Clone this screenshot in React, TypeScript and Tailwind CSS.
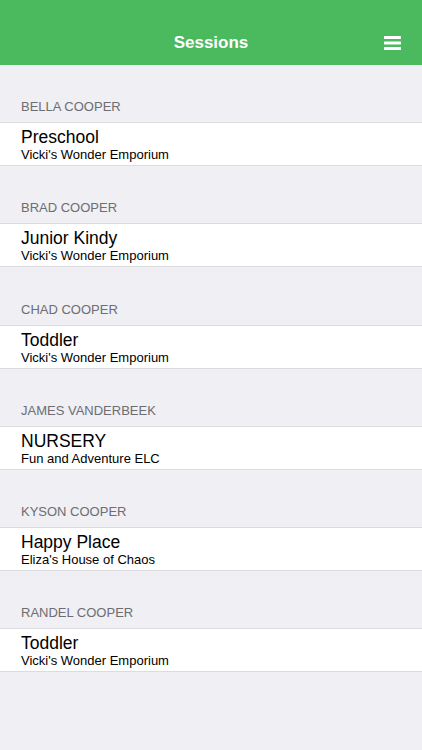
const sessions = [
  { child: "BELLA COOPER", room: "Preschool", centre: "Vicki's Wonder Emporium" },
  { child: "BRAD COOPER", room: "Junior Kindy", centre: "Vicki's Wonder Emporium" },
  { child: "CHAD COOPER", room: "Toddler", centre: "Vicki's Wonder Emporium" },
  { child: "JAMES VANDERBEEK", room: "NURSERY", centre: "Fun and Adventure ELC" },
  { child: "KYSON COOPER", room: "Happy Place", centre: "Eliza's House of Chaos" },
  { child: "RANDEL COOPER", room: "Toddler", centre: "Vicki's Wonder Emporium" },
];

function MenuIcon() {
  return (
    <svg width="17" height="14" viewBox="0 0 17 14" fill="#fff">
      <rect x="0" y="0" width="17" height="3" rx="0.5" />
      <rect x="0" y="5.5" width="17" height="3" rx="0.5" />
      <rect x="0" y="11" width="17" height="3" rx="0.5" />
    </svg>
  );
}

export default function App() {
  return (
    <div
      className="w-[422px] h-[750px] bg-[#efeff4] flex flex-col overflow-hidden"
      style={{ fontFamily: '"Liberation Sans", Arial, sans-serif' }}
    >
      <div className="h-[65px] bg-[#4bb95e] shrink-0 flex items-end pb-[12px] relative">
        <div className="w-full text-center text-white text-[17px] font-bold leading-[20px]">
          Sessions
        </div>
        <div className="absolute right-[21px] top-[36px]">
          <MenuIcon />
        </div>
      </div>

      <div className="flex flex-col">
        {sessions.map((s, i) => (
          <div key={i} className="flex flex-col">
            <div className="h-[57.2px] flex items-end px-[21px] pb-[7px]">
              <span className="text-[13px] leading-[16px] text-[#6d6d72]">
                {s.child}
              </span>
            </div>
            <div className="h-[44px] bg-white border-t border-b border-[#dcdce0] px-[21px] pt-[4px] flex flex-col">
              <span className="text-[17.5px] leading-[20px] text-black">{s.room}</span>
              <span className="text-[13px] leading-[16px] text-black">{s.centre}</span>
            </div>
          </div>
        ))}
      </div>
    </div>
  );
}
